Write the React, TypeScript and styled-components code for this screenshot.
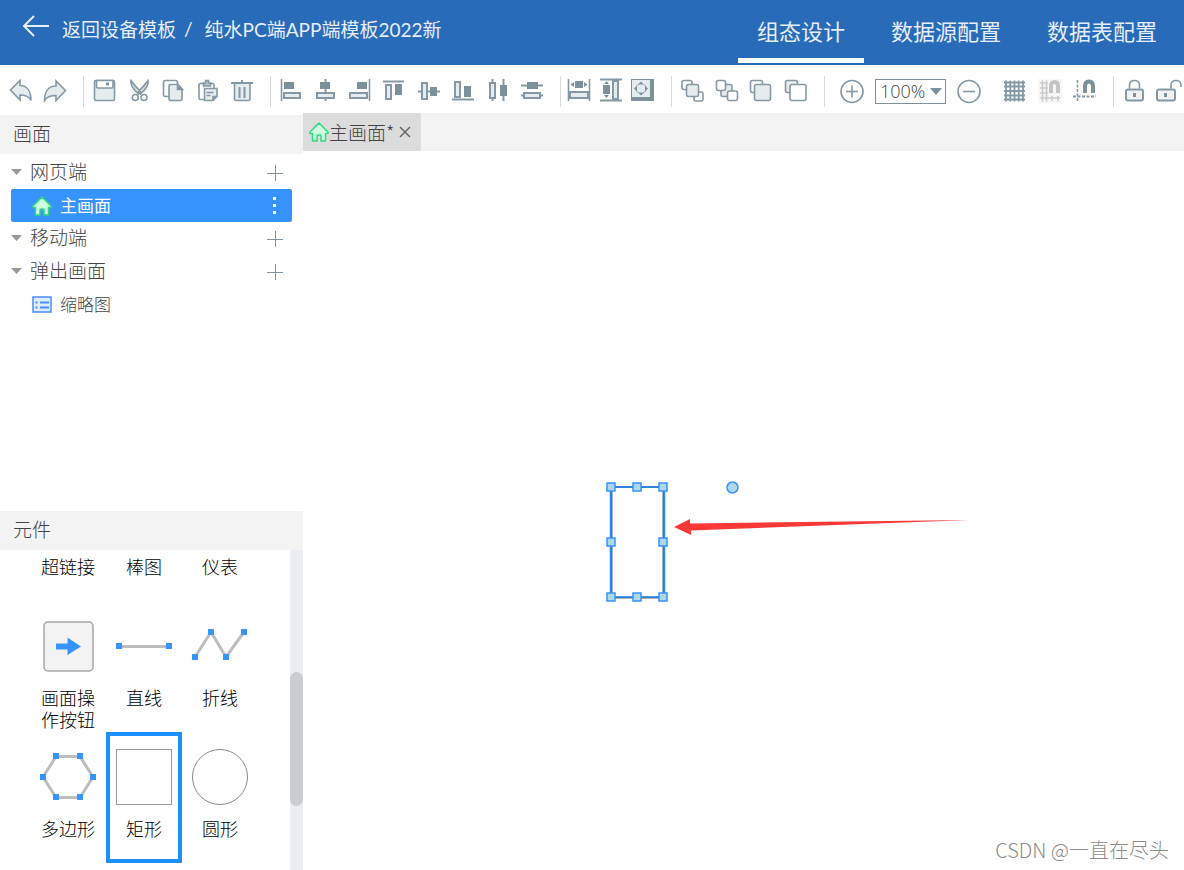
import React from "react";
import styled, { createGlobalStyle, css } from "styled-components";

const cjk = `"Noto Sans CJK SC", sans-serif`;
const line = "#8498a5";
const pale = "#e6ebee";

const GlobalStyle = createGlobalStyle`
  * { box-sizing: border-box; }
  body { margin: 0; background: #fff; font-family: ${cjk}; font-weight: 300; color: #444; }
  button, select { font: inherit; color: inherit; border: 0; background: none; padding: 0; margin: 0; }
  ul { list-style: none; margin: 0; padding: 0; }
  svg { display: block; flex: none; }
`;

const Page = styled.div`
  display: flex;
  flex-direction: column;
  height: 100vh;
  overflow: hidden;
`;

const TopBar = styled.header`
  display: flex;
  justify-content: space-between;
  height: 65px;
  flex: none;
  padding: 0 8px 0 22px;
  background: #276bb9;
  color: #e6eefa;
`;

const Breadcrumb = styled.div`
  display: flex;
  align-items: center;
  height: 56px;
  font-family: Lato, ${cjk};
  font-size: 19px;
  font-weight: 400;
  white-space: nowrap;
`;

const BackLink = styled.a`
  display: flex;
  align-items: center;
  gap: 12px;
  color: inherit;
  text-decoration: none;
  svg { margin-bottom: 4px; }
`;

const Slash = styled.span`
  margin: 0 12px 0 8px;
`;

const Tabs = styled.nav`
  display: flex;
  gap: 8px;
`;

const Tab = styled.a<{ $active?: boolean }>`
  height: 63px;
  padding: 0 19px;
  line-height: 60px;
  font-size: 22px;
  font-weight: 400;
  white-space: nowrap;
  color: inherit;
  text-decoration: none;
  border-bottom: 5px solid ${(p) => (p.$active ? "#fff" : "transparent")};
`;

const Toolbar = styled.div`
  display: flex;
  align-items: center;
  height: 48px;
  flex: none;
  padding: 4px 0 0 9px;
`;

const Group = styled.div<{ $width: number }>`
  display: flex;
  flex: none;
  justify-content: space-between;
  width: ${(p) => p.$width}px;
`;

const Divider = styled.span<{ $after?: number }>`
  flex: none;
  width: 1px;
  height: 31px;
  margin: 0 ${(p) => p.$after ?? 8}px 0 16px;
  background: #d9d9d9;
`;

const ZoomGroup = styled.div`
  display: flex;
  align-items: center;
  gap: 11px;
  margin-right: 21px;
  flex: none;
`;

const IconButton = styled.button<{ $muted?: boolean }>`
  width: 24px;
  height: 24px;
  flex: none;
  ${(p) => p.$muted && css`background: #f6f6f6;`}
`;

const ZoomBox = styled.div`
  position: relative;
  width: 71px;
  &::after {
    content: "";
    position: absolute;
    right: 4px;
    top: 9px;
    border: solid transparent;
    border-width: 7px 6px 0;
    border-top-color: #7d919d;
    pointer-events: none;
  }
`;

const ZoomSelect = styled.select`
  appearance: none;
  display: block;
  width: 100%;
  height: 25px;
  padding-left: 4px;
  border: 1px solid #7d919d;
  font-size: 18px;
  font-family: "Open Sans", sans-serif;
  font-weight: 300;
  line-height: 22px;
`;

const Workspace = styled.div`
  display: flex;
  flex: 1;
  min-height: 0;
`;

const Sidebar = styled.aside`
  display: flex;
  flex-direction: column;
  width: 303px;
  flex: none;
  padding-top: 2px;
`;

const PagesPanel = styled.section`
  flex: 1;
  min-height: 0;
`;

const PartsPanel = styled.section`
  height: 359px;
  display: flex;
  flex-direction: column;
  flex: none;
`;

const PanelTitle = styled.h2`
  margin: 0;
  height: 39px;
  flex: none;
  padding-left: 13px;
  background: #f3f3f3;
  font-size: 19px;
  font-weight: 300;
  line-height: 36px;
`;

const Tree = styled.ul`
  padding: 2px 11px;
`;

const TreeGroup = styled.li`
  display: flex;
  align-items: center;
  height: 33px;
  padding-right: 9px;
`;

const Toggle = styled.button`
  display: flex;
  align-items: center;
  gap: 8px;
  margin-right: auto;
  font-size: 19px;
  line-height: 29px;
  padding-bottom: 4px;
  svg { margin-top: 2px; }
`;

const AddButton = styled.button``;

const TreeItem = styled.li<{ $active?: boolean }>`
  display: flex;
  align-items: center;
  justify-content: space-between;
  height: 33px;
  padding: 0 14px 0 21px;
  border-radius: 2px;
  font-size: 17px;
  ${(p) => p.$active && css`background: #3794ff; color: #fff; font-weight: 400;`}
`;

const ItemLink = styled.a`
  display: flex;
  align-items: center;
  gap: 8px;
  color: inherit;
  text-decoration: none;
  span { padding-bottom: 2px; }
`;

const PartsBody = styled.div`
  display: flex;
  justify-content: space-between;
  flex: 1;
  min-height: 0;
  overflow: hidden;
`;

const PartsGrid = styled.div`
  display: grid;
  grid-template-columns: repeat(3, 76px);
  grid-template-rows: 51px 131px 131px;
  padding-left: 30px;
`;

const Part = styled.button<{ $selected?: boolean }>`
  display: flex;
  flex-direction: column;
  align-items: center;
  justify-content: flex-start;
  gap: 12px;
  padding-top: ${(p) => (p.$selected ? 13 : 17)}px;
  border: ${(p) => (p.$selected ? "4px solid #1e8fff" : "0")};
  color: #000;
  font-size: 18px;
  line-height: 22px;
  &:nth-child(-n + 3) { padding-top: 5px; }
  span { width: 54px; }
`;

const Track = styled.div`
  width: 13px;
  padding-top: 122px;
  background: #ebedf2;
`;

const Thumb = styled.div`
  height: 134px;
  border-radius: 7px;
  background: #cbccd2;
`;

const Editor = styled.main`
  display: flex;
  flex-direction: column;
  flex: 1;
  min-width: 0;
`;

const FileTabs = styled.div`
  display: flex;
  height: 38px;
  flex: none;
  background: #f3f3f3;
`;

const FileTab = styled.div`
  display: flex;
  align-items: center;
  padding: 0 10px 0 6px;
  background: #dcdcdc;
  font-size: 19px;
  white-space: nowrap;
  span { padding-bottom: 2px; }
  button { margin-left: 5px; }
`;

const Canvas = styled.div`
  position: relative;
  flex: 1;
  overflow: hidden;
`;

const Drawing = styled.svg`
  position: absolute;
  left: 297px;
  top: 324px;
`;

const Watermark = styled.span`
  position: absolute;
  right: 15px;
  bottom: 6px;
  font-size: 20px;
  line-height: 28px;
  color: #8c8c8c;
`;

/* Toolbar drawings, each on a 24 by 24 grid */
const Solid = (p: React.SVGProps<SVGRectElement>) => <rect fill="#7d919d" stroke="none" {...p} />;
const Hollow = (p: React.SVGProps<SVGRectElement>) => <rect fill={pale} strokeWidth="2" {...p} />;

const icons: Record<string, React.ReactNode> = {
  撤销: <path d="M1.500 11 11 1.500V6.500C18 6.500 22 12 22 21.500 20 17.500 17 16 11 16v5z" fill={pale} />,
  重做: <path d="M22.500 11.500 13 2v5C6 7 1.500 12 1.500 21.500 4 17.500 7 16.500 13 16.500v5z" fill={pale} />,
  保存: <><rect x="2.500" y="1.500" width="20" height="20" rx="1.500" fill={pale} /><path d="M4.500 1.500v6q0 1.500 1.500 1.500h13.500q1.500 0 1.500-1.500v-6z" fill="#fff" /><Solid x="14" y="3.500" width="3" height="3" /></>,
  剪切: <><path d="M4 1.500c-1 4 3 9.500 7.500 13.500l2-2.500C11 10 8 7 4 1.500zM21 1.500c1 4-3 9.500-7.500 13.500l-2-2.500C14 10 17 7 21 1.500z" fill="#d3dbe0" /><circle cx="8.300" cy="18.500" r="3" fill="#fff" /><circle cx="17" cy="18.500" r="3" fill="#fff" /></>,
  复制: <><rect x="2.500" y="1.500" width="14" height="16" rx="2" fill="#fff" /><path d="M9.500 5.500h7l4.500 4.500v10q0 1.500-1.500 1.500h-10Q8 21.500 8 20V7q0-1.500 1.500-1.500z" fill={pale} /><path d="M16.500 5.500v5h5z" fill="#7d919d" /></>,
  粘贴: <><rect x="3" y="4.500" width="15" height="16" rx="1.500" fill="#fff" /><path d="M7.500 7V4h2V1.500h3V4h2v3z" fill="#b7c4cb" /><path d="M8.500 9.500h12.500v8l-4 4H8.500zM10.500 13.500h7M10.500 16.500h4M21 17.500h-4v4" fill={pale} /></>,
  删除: <><path d="M4.500 4.500v15.500q0 1.500 1.500 1.500h12.500q1.500 0 1.500-1.500V4.500" fill={pale} /><path d="M1 4h22M12 1v3" strokeWidth="2" /><path d="M9.500 8v11M14.500 8v11" strokeWidth="2" /></>,
  左对齐: <><path d="M2.500 0v22" /><Solid x="5" y="3" width="10" height="7" /><Hollow x="5" y="14" width="16" height="5" /></>,
  水平居中: <><path d="M12.500 0v22" strokeWidth="2" /><Solid x="7" y="3" width="10" height="7" /><Hollow x="4" y="14" width="17" height="5" /></>,
  右对齐: <><path d="M21.500 0v22" /><Solid x="9" y="3" width="10" height="7" /><Hollow x="2" y="14" width="17" height="5" /></>,
  顶对齐: <><path d="M1 2.500h21" strokeWidth="2" /><Hollow x="4" y="6" width="5" height="14" /><Solid x="13" y="5" width="7" height="11" /></>,
  垂直居中: <><path d="M1 12.500h22" strokeWidth="2" /><Hollow x="5" y="4" width="5" height="16" /><Solid x="13" y="8" width="7" height="9" /></>,
  底对齐: <><path d="M1 20.500h22" strokeWidth="2" /><Hollow x="4" y="3" width="5" height="15" /><Solid x="13" y="7" width="7" height="11" /></>,
  水平分布: <><path d="M6.500 0v22M17.500 0v22" strokeWidth="2" /><Hollow x="4" y="4" width="5" height="15" /><Solid x="14" y="6" width="7" height="11" /></>,
  垂直分布: <><path d="M1 6.500h22M1 16.500h22" strokeWidth="2" /><Solid x="7" y="3" width="11" height="7" /><Hollow x="4" y="14" width="16" height="5" /></>,
  等宽: <><path d="M1.500 0v22M22.500 0v22" /><Solid x="8" y="2" width="8" height="7" /><path d="M3.500 5.500 7 3v5zM20.500 5.500 17 3v5z" fill="#7d919d" stroke="none" /><Hollow x="3" y="13" width="18" height="6" /></>,
  等高: <><path d="M1 .500h22M1 21.500h22" strokeWidth="2" /><Solid x="4" y="6" width="7" height="9" /><path d="M7.500 2 10 5H5zM7.500 19 10 16H5z" fill="#7d919d" stroke="none" /><Hollow x="14" y="2" width="5" height="18" /></>,
  等大小: <><Solid x="0" y="0" width="23" height="22" /><rect x="1" y="1" width="18" height="17" fill={pale} stroke="none" /><path d="M10 2.500 13 5.500H7zM10 16.500 13 13.500H7zM3 9.500 6 6.500v6zM17 9.500 14 6.500v6z" fill="#7d919d" stroke="none" /><circle cx="10" cy="9.500" r="5" strokeWidth="1" strokeDasharray="3 4.850" strokeDashoffset="-2.500" /></>,
  上移一层: <><rect x="2" y="1.500" width="10" height="9" rx="2" fill="#fff" /><rect x="14" y="13" width="9" height="9" rx="2" fill="#fff" /><rect x="6.500" y="5.500" width="12" height="12" rx="2" fill={pale} /></>,
  下移一层: <><rect x="6" y="5.500" width="11" height="12" rx="2" fill={pale} /><rect x="1.500" y="1.500" width="9" height="10" rx="2" fill="#fff" /><rect x="12.500" y="12" width="10" height="9.500" rx="2" fill="#fff" /></>,
  置于顶层: <><rect x="1.500" y="1.500" width="12" height="12" rx="2" fill="#fff" /><rect x="5.500" y="5.500" width="16" height="16" rx="2" fill={pale} /></>,
  置于底层: <><rect x="1.500" y="1.500" width="12" height="12" rx="2" fill={pale} /><rect x="6" y="5.500" width="16" height="16" rx="2" fill="#fff" /></>,
  放大: <><circle cx="12" cy="12.500" r="11" /><path d="M6 12.500h12M12 6.500v12" /></>,
  缩小: <><circle cx="12" cy="12.500" r="11" /><path d="M6 12.500h12" /></>,
  网格: <path d="M2 3.500h21M2 7.500h21M2 12h21M2 16.500h21M2 20.500h21M4 1.500v21M8.300 1.500v21M12.500 1.500v21M16.700 1.500v21M21 1.500v21" strokeWidth="1.800" />,
  吸附网格: <g stroke="#ccc"><path d="M2 4h8M2 9h8M2 14h8M2 19h20M4.500 1.500v21M8.500 1.500v21M14 17v5M20 17v5" /><path d="M13 14V7q0-4 3.500-4T20 7v7" stroke="#c4c4c4" strokeWidth="4" /></g>,
  吸附参考线: <><path d="M4.500 1v21" strokeDasharray="3 1.500" /><path d="M0 17.500h23" strokeDasharray="3 1.500" strokeWidth="2" /><path d="M12 14V7q0-4.500 4-4.500T20 7v7" stroke="#7d919d" strokeWidth="4" /></>,
  锁定: <><rect x="4" y="10.500" width="17" height="11" rx="2" fill="#f2f2f2" strokeWidth="2" /><path d="M7.500 9.500V6.500q0-5 5-5t5 5v3" /><Solid x="11" y="14" width="3" height="4" /></>,
  解锁: <><rect x="0" y="10.500" width="18" height="11" rx="2" fill="#f2f2f2" strokeWidth="2" /><path d="M14 9.500V6.500q0-5 5-5T24 6.500v1.500" /><Solid x="7" y="14" width="3" height="4" /></>,
};

const Tool = ({ name }: { name: string }) => (
  <IconButton aria-label={name} $muted={name === "吸附网格"}>
    <svg width="24" height="24" viewBox="0 0 24 24" fill="none" stroke={line} strokeWidth="1.600" overflow="visible">
      {icons[name]}
    </svg>
  </IconButton>
);

const Tools = ({ names, width }: { names: string[]; width: number }) => (
  <Group $width={width}>{names.map((n) => <Tool key={n} name={n} />)}</Group>
);

const HomeIcon = ({ size }: { size: number }) => (
  <svg width={size} height={size} viewBox="0 0 20 20" fill="#ccffe0" stroke="#2ed87b" strokeWidth="1.500" strokeLinejoin="round">
    <path d="M10 1 1 10v1.500h2.500V19H8v-5q0-1 1-1h2q1 0 1 1v5h4.500v-7.500H19V10z" />
  </svg>
);

const ListIcon = () => (
  <svg width="20" height="17" viewBox="0 0 20 17" fill="none" stroke="#4a8ff7" strokeWidth="2">
    <rect x="1" y="1" width="18" height="15" fill="#dfebff" strokeWidth="1.500" />
    <path d="M3.500 6.500h2M8 6.500h9M3.500 11.500h2M8 11.500h9" />
  </svg>
);

const Nodes = ({ path, points }: { path: string; points: number[][] }) => (
  <svg width="56" height="56" viewBox="0 0 56 56">
    <path d={path} fill="none" stroke="#bdbdbd" strokeWidth="3" />
    {points.map(([x, y]) => <rect key={`${x},${y}`} x={x - 3} y={y - 3} width="6" height="6" fill="#3794ff" />)}
  </svg>
);

const parts: { label: string; art?: React.ReactNode; selected?: boolean }[] = [
  { label: "超链接" },
  { label: "棒图" },
  { label: "仪表" },
  {
    label: "画面操作按钮",
    art: (
      <svg width="56" height="56" viewBox="0 0 56 56">
        <rect x="4" y="4" width="49" height="49" rx="4" fill="#f3f3f3" stroke="#a6a6a6" strokeWidth="1.500" />
        <path d="M16 25.500h11.500v-6L41 28.500 27.500 37v-5.500H16z" fill="#3794ff" />
      </svg>
    ),
  },
  { label: "直线", art: <Nodes path="M3 28.500H53" points={[[3, 28], [53, 28]]} /> },
  { label: "折线", art: <Nodes path="M3 39 19 14 34 39 52 14" points={[[3, 39], [19, 14], [34, 39], [52, 14]]} /> },
  {
    label: "多边形",
    art: <Nodes path="M3 28 16 7.500H40L53 28 40 48.500H16z" points={[[3, 28], [16, 7], [40, 7], [53, 28], [40, 48], [16, 48]]} />,
  },
  {
    label: "矩形",
    selected: true,
    art: <svg width="56" height="56"><rect x=".500" y=".500" width="55" height="55" fill="none" stroke="#999" /></svg>,
  },
  { label: "圆形", art: <svg width="56" height="56"><circle cx="28" cy="28" r="27.500" fill="none" stroke="#888" /></svg> },
];

const handles = [[11, 12], [37, 12], [63, 12], [11, 67], [63, 67], [11, 122], [37, 122], [63, 122]];

const GroupRow = ({ label }: { label: string }) => (
  <TreeGroup>
    <Toggle>
      <svg width="11" height="6"><path d="M0 0h11L5.500 6z" fill="#999" /></svg>
      {label}
    </Toggle>
    <AddButton aria-label={`添加${label}`}>
      <svg width="16" height="16" stroke="#8493a0"><path d="M0 8.500h16M8.500 0v16" /></svg>
    </AddButton>
  </TreeGroup>
);

export default function App() {
  return (
    <Page>
      <GlobalStyle />
      <TopBar>
        <Breadcrumb>
          <BackLink href="#templates">
            <svg width="28" height="22" viewBox="0 0 28 22" fill="none" stroke="#e6eefa" strokeWidth="2">
              <path d="M27 11H2M12 1 2 11l10 10" />
            </svg>
            返回设备模板
          </BackLink>
          <Slash>/</Slash>
          <span>纯水PC端APP端模板2022新</span>
        </Breadcrumb>
        <Tabs>
          <Tab href="#design" $active>组态设计</Tab>
          <Tab href="#source">数据源配置</Tab>
          <Tab href="#tables">数据表配置</Tab>
        </Tabs>
      </TopBar>
      <Toolbar>
        <Tools width={58} names={["撤销", "重做"]} />
        <Divider />
        <Tools width={162} names={["保存", "剪切", "复制", "粘贴", "删除"]} />
        <Divider />
        <Tools width={265} names={["左对齐", "水平居中", "右对齐", "顶对齐", "垂直居中", "底对齐", "水平分布", "垂直分布"]} />
        <Divider $after={6} />
        <Tools width={88} names={["等宽", "等高", "等大小"]} />
        <Divider />
        <Tools width={128} names={["上移一层", "下移一层", "置于顶层", "置于底层"]} />
        <Divider $after={15} />
        <ZoomGroup>
          <Tool name="放大" />
          <ZoomBox>
            <ZoomSelect aria-label="缩放比例" defaultValue="100%">
              <option>100%</option>
            </ZoomSelect>
          </ZoomBox>
          <Tool name="缩小" />
        </ZoomGroup>
        <Tools width={95} names={["网格", "吸附网格", "吸附参考线"]} />
        <Divider />
        <Tools width={59} names={["锁定", "解锁"]} />
      </Toolbar>
      <Workspace>
        <Sidebar>
          <PagesPanel>
            <PanelTitle>画面</PanelTitle>
            <Tree>
              <GroupRow label="网页端" />
              <TreeItem $active>
                <ItemLink href="#main"><HomeIcon size={20} /><span>主画面</span></ItemLink>
                <button aria-label="更多">
                  <svg width="8" height="18" fill="#fff"><path d="M3 0h3v3H3zM3 7h3v3H3zM3 14h3v3H3z" /></svg>
                </button>
              </TreeItem>
              <GroupRow label="移动端" />
              <GroupRow label="弹出画面" />
              <TreeItem>
                <ItemLink href="#thumb"><ListIcon /><span>缩略图</span></ItemLink>
              </TreeItem>
            </Tree>
          </PagesPanel>
          <PartsPanel>
            <PanelTitle>元件</PanelTitle>
            <PartsBody>
              <PartsGrid>
                {parts.map((p) => (
                  <Part key={p.label} $selected={p.selected}>
                    {p.art}
                    <span>{p.label}</span>
                  </Part>
                ))}
              </PartsGrid>
              <Track><Thumb /></Track>
            </PartsBody>
          </PartsPanel>
        </Sidebar>
        <Editor>
          <FileTabs>
            <FileTab>
              <HomeIcon size={20} />
              <span>主画面*</span>
              <button aria-label="关闭">
                <svg width="12" height="12" stroke="#666" strokeWidth="1.500"><path d="M1 1l10 10M11 1 1 11" /></svg>
              </button>
            </FileTab>
          </FileTabs>
          <Canvas>
            <Drawing width="380" height="140" viewBox="0 0 380 140">
              <rect x="11.500" y="12" width="52" height="110.500" fill="none" stroke="#666" strokeWidth="2" />
              <rect x="10.500" y="12" width="54" height="110" fill="none" stroke="#1e8fff" strokeWidth="1.500" />
              {handles.map(([x, y]) => (
                <rect key={`${x},${y}`} x={x - 4} y={y - 4} width="8" height="8" fill="#add8e6" stroke="#3794ff" strokeWidth="1.500" />
              ))}
              <circle cx="132.500" cy="12.500" r="5.500" fill="#add8e6" stroke="#3794ff" strokeWidth="1.500" />
              <path d="M74 52 90 44v4.500L370 45 91 55.500V60z" fill="#fb3838" />
            </Drawing>
            <Watermark>CSDN @一直在尽头</Watermark>
          </Canvas>
        </Editor>
      </Workspace>
    </Page>
  );
}
